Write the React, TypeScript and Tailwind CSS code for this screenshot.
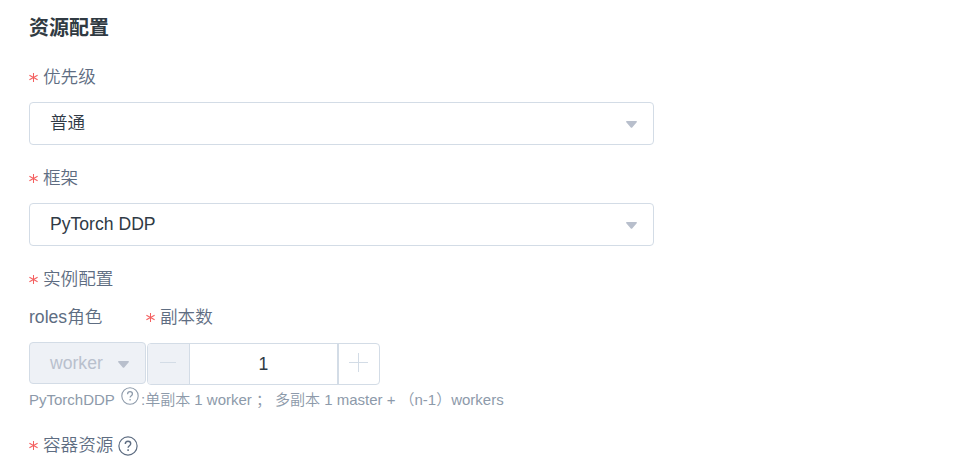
import type { ReactNode } from "react";

function Star() {
  return (
    <svg className="mt-px mr-[5px] h-[9px] w-[9px] shrink-0" viewBox="0 0 9 9" fill="none" stroke="#f46060" strokeWidth="1.05">
      <path d="M4.5 0v9M.4 2.2l8.2 4.6M8.6 2.2L.4 6.8" />
    </svg>
  );
}

function Label({ children, required = true }: { children: ReactNode; required?: boolean }) {
  return (
    <div className="flex h-6 items-center text-[17.6px] leading-6 whitespace-nowrap text-[#5e6d82]">
      {required && <Star />}
      {children}
    </div>
  );
}

function Caret() {
  return (
    <svg className="h-[7px] w-[11px] shrink-0" viewBox="0 0 11 7" fill="#b8bfcc">
      <path d="M.8 0h9.4c.7 0 1 .8.5 1.3L6.2 6.4c-.4.4-1 .4-1.4 0L.3 1.3C-.2.8.1 0 .8 0z" />
    </svg>
  );
}

function Select({ value }: { value: string }) {
  return (
    <div className="flex h-[43px] w-[625px] items-center justify-between rounded border border-[#d3dce6] bg-white pr-4 pl-5 text-[17.6px] text-[#303a45]">
      <span className="pb-0.5 leading-6">{value}</span>
      <span className="pt-0.5"><Caret /></span>
    </div>
  );
}

function Question({ className }: { className: string }) {
  return (
    <svg className={className} viewBox="0 0 20 20" fill="none" stroke="currentColor">
      <circle cx="10" cy="10" r="9.1" strokeWidth="1.2" />
      <path d="M7.3 8c0-1.8 1.1-2.8 2.7-2.8s2.7 1 2.7 2.5c0 2-2.6 2-2.6 4.1" strokeWidth="1.4" />
      <path d="M10.1 13.2v1.7" strokeWidth="1.5" />
    </svg>
  );
}

export default function App() {
  return (
    <main className="h-[465px] w-[973px] overflow-hidden bg-white pl-[29px] font-['Liberation_Sans','Noto_Sans_CJK_SC',sans-serif] font-[350]">
      <h2 className="pt-3.5 text-[20px] leading-7 font-bold text-[#303a42]">资源配置</h2>
      <div className="mt-[23px]"><Label>优先级</Label></div>
      <div className="mt-[13px]"><Select value="普通" /></div>
      <div className="mt-[21px]"><Label>框架</Label></div>
      <div className="mt-[13px]"><Select value="PyTorch DDP" /></div>
      <div className="mt-[21px]"><Label>实例配置</Label></div>
      <div className="mt-3.5 flex">
        <div className="w-[117px]"><Label required={false}>roles角色</Label></div>
        <Label>副本数</Label>
      </div>
      <div className="mt-[13px] flex gap-px">
        <div className="flex h-[42px] w-[117px] items-center justify-between rounded border border-[#d3dce6] bg-[#eef1f6] pr-4 pl-5 text-[17.6px] text-[#b9c0cd]">
          <span>worker</span>
          <span className="pt-[3px]"><Caret /></span>
        </div>
        <div className="mt-px flex h-[42px] w-[233px] overflow-hidden rounded border border-[#d3dce6] text-[#d3dce6]">
          <div className="flex w-[42px] items-center justify-center border-r border-[#d3dce6] bg-[#eef1f6] pr-px pb-0.5">
            <svg className="h-5 w-5" viewBox="0 0 20 20" stroke="currentColor"><path d="M2 9.5h16" /></svg>
          </div>
          <div className="flex flex-1 items-center justify-center text-[17.6px] text-[#303a45]">1</div>
          <div className="flex w-[42px] items-center justify-center border-l-2 border-[#d3dce6] pb-0.5">
            <svg className="h-5 w-5" viewBox="0 0 20 20" stroke="currentColor"><path d="M0 9.5h19M9.5 0v19" /></svg>
          </div>
        </div>
      </div>
      <div className="mt-1 flex h-5 items-center text-[15px] leading-5 whitespace-nowrap text-[#8d9aaa]">
        <span className="w-[92px] pt-0.5">PyTorchDDP</span>
        <Question className="mb-1.5 h-[18px] w-[18px]" />
        <span className="ml-0.5 pt-0.5">:单副本 1 worker ；</span>
        <span className="ml-1 pt-0.5">多副本 1 master +</span>
        <span className="ml-1 pt-0.5">（n-1）workers</span>
      </div>
      <div className="mt-6 flex items-center">
        <Label>容器资源</Label>
        <Question className="mt-px ml-[5px] h-5 w-5 text-[#5e6d82]" />
      </div>
    </main>
  );
}
